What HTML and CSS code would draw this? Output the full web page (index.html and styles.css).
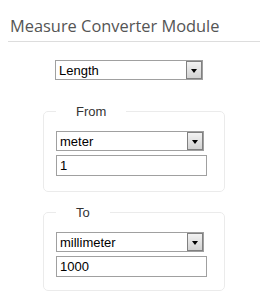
FILE: index.html
```html
<!DOCTYPE html>
<html>
<head>
    <title>Measure Converter Module</title>
    <link rel="stylesheet" href="styles.css">
</head>
<body>
    <div class="module">
        <h3 class="module-title">Measure Converter Module</h3>

        <div class="select-wrap type-select">
            <select class="dd">
                <option>Length</option>
                <option>Weight</option>
                <option>Volume</option>
            </select>
            <span class="dd-btn"></span>
        </div>

        <fieldset class="unit-box">
            <legend>From</legend>
            <div class="select-wrap">
                <select class="dd">
                    <option>meter</option>
                    <option>millimeter</option>
                </select>
                <span class="dd-btn"></span>
            </div>
            <input class="val" type="text" value="1">
        </fieldset>

        <fieldset class="unit-box unit-to">
            <legend>To</legend>
            <div class="select-wrap">
                <select class="dd">
                    <option>millimeter</option>
                    <option>meter</option>
                </select>
                <span class="dd-btn"></span>
            </div>
            <input class="val" type="text" value="1000">
        </fieldset>
    </div>
</body>
</html>
```

FILE: styles.css
```css
body { margin: 0; background: #fff; font-family: "Liberation Sans", Arial, sans-serif; font-size: 13px; color: #000; }
.module { padding: 0 5px 0 8px; }
.module-title { margin: 0; padding: 16px 0 5px 2px; font-family: "Open Sans", sans-serif; font-weight: normal; font-size: 16.4px; color: #555; border-bottom: 1px solid #ddd; line-height: 20px; }

.select-wrap { position: relative; width: 148px; height: 20px; }
.type-select { margin: 18px 0 0 47px; }
.dd { -webkit-appearance: none; appearance: none; box-sizing: border-box; width: 100%; height: 20px; margin: 0; padding: 0 0 0 3px; border: 1px solid #a0a0a0; border-radius: 0; background: #fff; font-family: "Liberation Sans", Arial, sans-serif; font-size: 13px; color: #000; outline: none; }
.dd-btn { position: absolute; right: 1px; top: 1px; width: 14px; height: 16px; border: 1px solid #808080; background: linear-gradient(#f2f2f2, #d2d2d2); pointer-events: none; }
.dd-btn::after { content: ""; position: absolute; left: 4px; top: 7px; border-left: 3px solid transparent; border-right: 3px solid transparent; border-top: 4px solid #000; }

.unit-box { margin: 24px 35px 0 35px; padding: 0 12px 15px 12px; border: 1px solid #ebebeb; border-radius: 5px; }
.unit-to { margin-top: 13px; padding-bottom: 13px; }
.unit-box legend { margin-left: 0; padding: 0 20px; font-size: 13px; color: #333; line-height: 15px; }
.unit-box .select-wrap { margin-top: 12px; }
.val { box-sizing: border-box; display: block; width: 151px; height: 21px; margin: 4px 0 0 0; padding: 0 3px; border: 1px solid #a0a0a0; font-family: "Liberation Sans", Arial, sans-serif; font-size: 13px; color: #000; outline: none; }
```
